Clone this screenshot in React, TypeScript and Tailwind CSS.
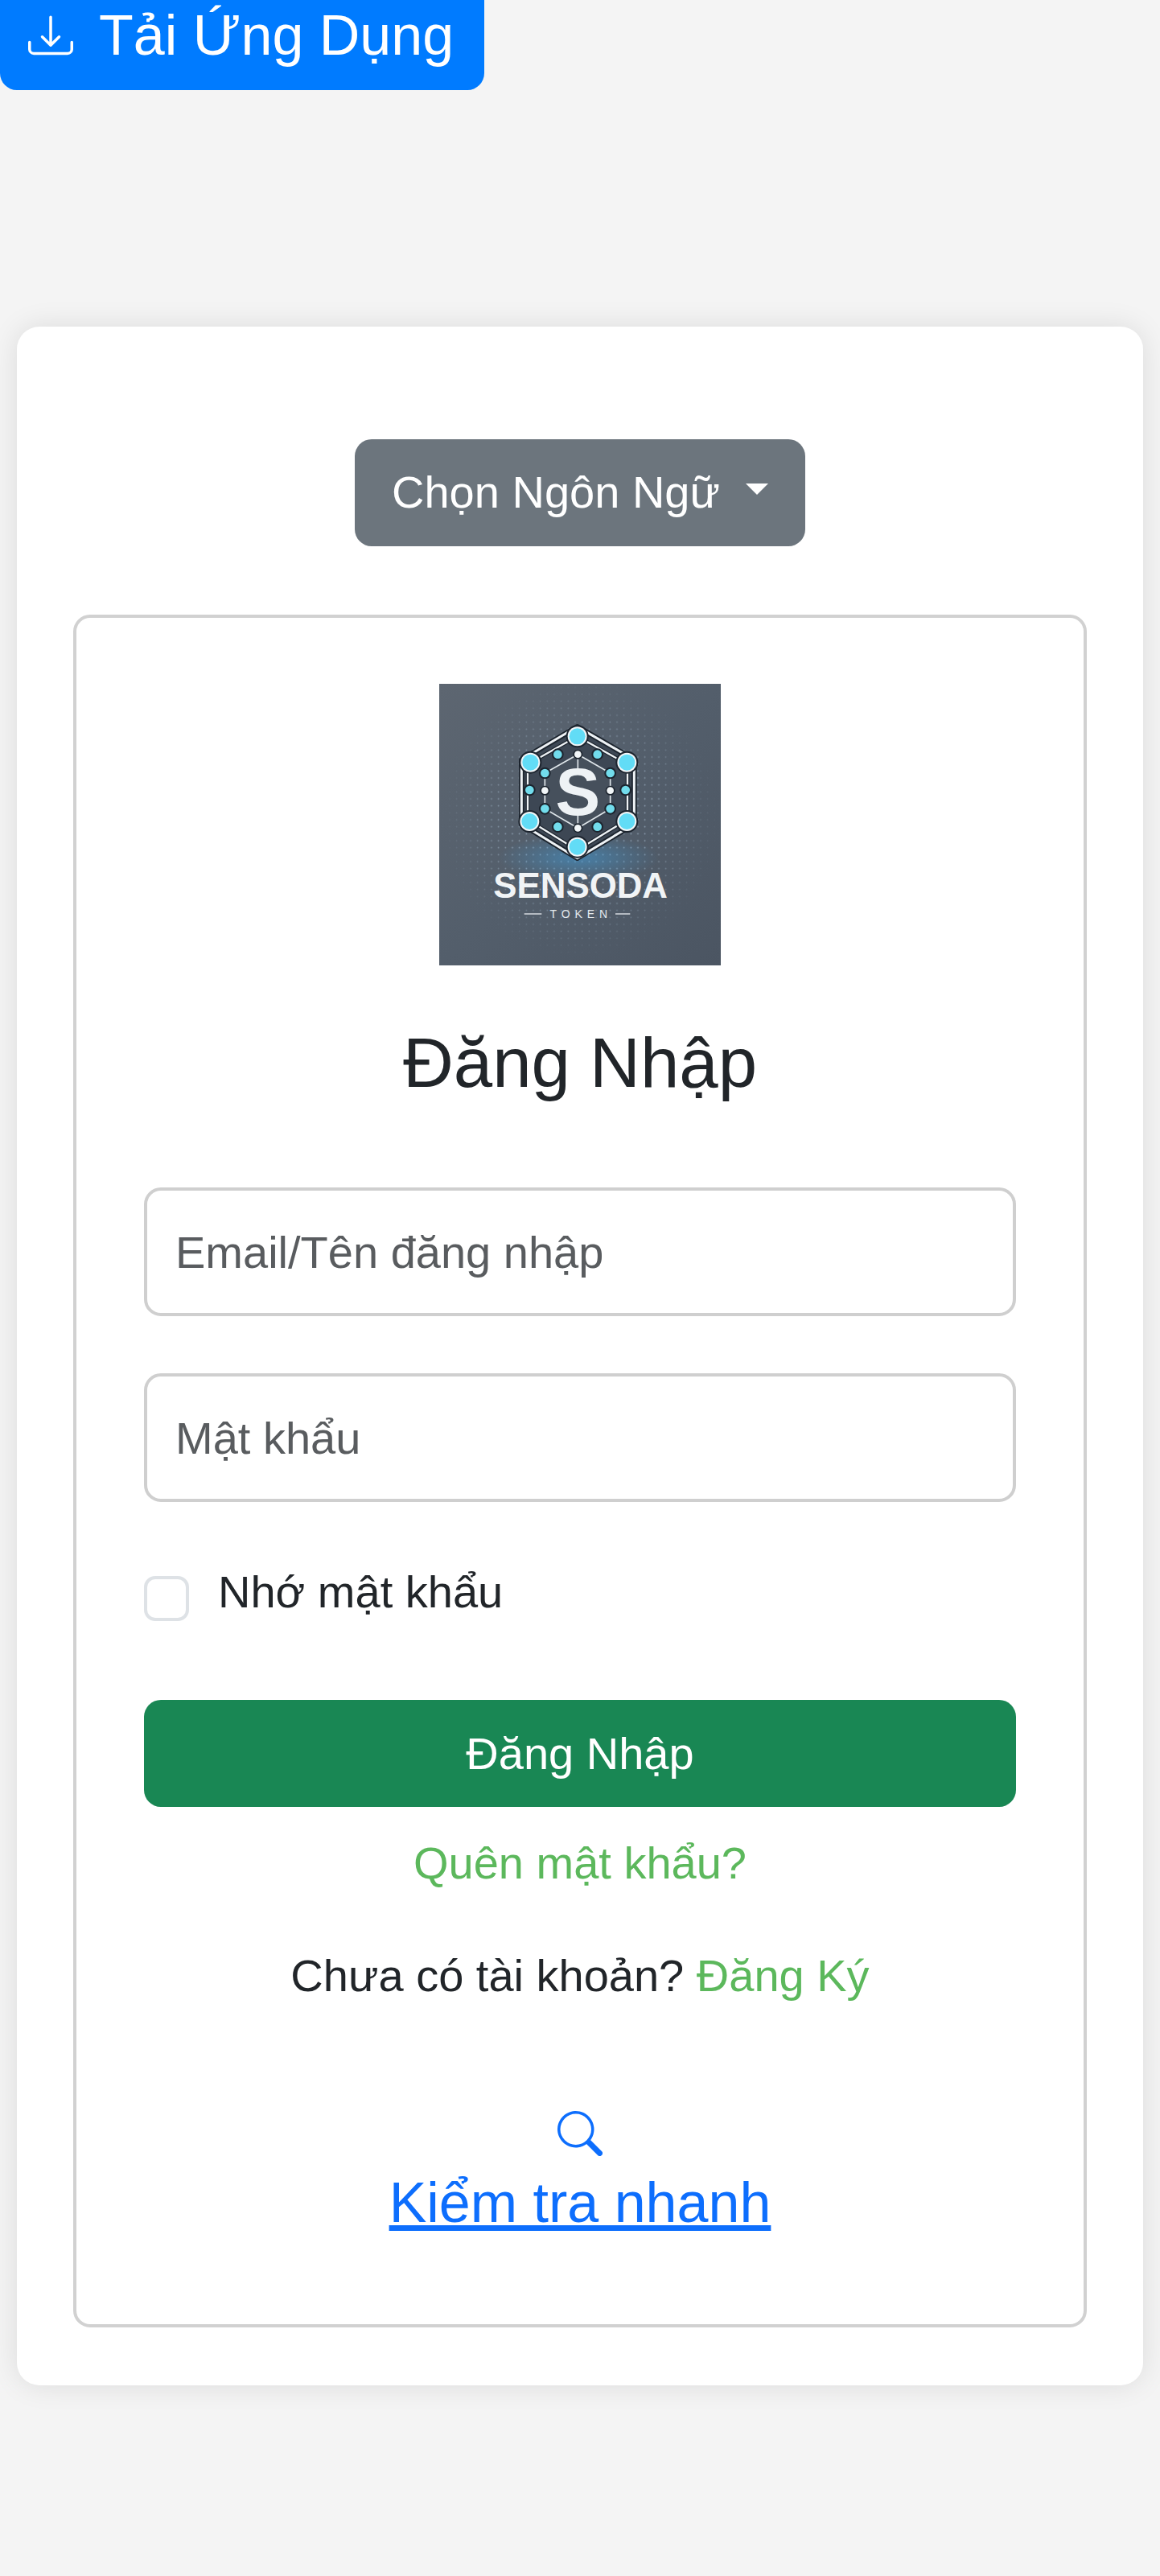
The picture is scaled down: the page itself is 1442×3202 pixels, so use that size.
import React from 'react';

function DownloadIcon() {
  return (
    <svg width="56" height="56" viewBox="0 0 16 16" fill="white" className="shrink-0">
      <path d="M.5 9.9a.5.5 0 0 1 .5.5v2.5a1 1 0 0 0 1 1h12a1 1 0 0 0 1-1v-2.5a.5.5 0 0 1 1 0v2.5a2 2 0 0 1-2 2H2a2 2 0 0 1-2-2v-2.5a.5.5 0 0 1 .5-.5z" />
      <path d="M7.646 11.854a.5.5 0 0 0 .708 0l3-3a.5.5 0 0 0-.708-.708L8.5 10.293V1.5a.5.5 0 0 0-1 0v8.793L5.354 8.146a.5.5 0 1 0-.708.708l3 3z" />
    </svg>
  );
}

function SearchIcon() {
  return (
    <svg width="56" height="56" viewBox="0 0 16 16" fill="#0d6efd">
      <path d="M11.742 10.344a6.5 6.5 0 1 0-1.397 1.398h-.001c.03.04.062.078.098.115l3.85 3.85a1 1 0 0 0 1.415-1.414l-3.85-3.85a1.007 1.007 0 0 0-.115-.1zM12 6.5a5.5 5.5 0 1 1-11 0 5.5 5.5 0 0 1 11 0z" />
    </svg>
  );
}

const bigNodes = [[515, 196], [340, 293], [700, 293], [337, 513], [700, 513], [515, 608]];
const midNodes = [[442, 263], [590, 263], [337, 396], [695, 396], [394, 333], [638, 333], [394, 466], [638, 466], [442, 533], [590, 533]];
const whiteNodes = [[517, 263], [394, 398], [638, 398], [517, 538]];

function Logo() {
  return (
    <svg width="350" height="350" viewBox="0 0 1050 1050" className="block">
      <defs>
        <linearGradient id="bg" x1="0" y1="0" x2="1" y2="1">
          <stop offset="0" stopColor="#5d6671" />
          <stop offset="0.5" stopColor="#535e6b" />
          <stop offset="1" stopColor="#4b5562" />
        </linearGradient>
        <pattern id="dots" width="26" height="26" patternUnits="userSpaceOnUse">
          <circle cx="13" cy="13" r="2.6" fill="#b5cde2" fillOpacity="0.6" />
        </pattern>
        <radialGradient id="glow" cx="0.5" cy="0.5" r="0.5">
          <stop offset="0" stopColor="#3f9bd8" stopOpacity="0.55" />
          <stop offset="1" stopColor="#3f9bd8" stopOpacity="0" />
        </radialGradient>
        <radialGradient id="dotFade" cx="0.5" cy="0.48" r="0.5">
          <stop offset="0.5" stopColor="white" />
          <stop offset="1" stopColor="black" />
        </radialGradient>
        <mask id="fade">
          <rect width="1050" height="1050" fill="url(#dotFade)" />
        </mask>
      </defs>
      <rect width="1050" height="1050" fill="url(#bg)" />
      <rect width="1050" height="1050" fill="url(#dots)" mask="url(#fade)" />
      <ellipse cx="520" cy="650" rx="300" ry="90" fill="url(#glow)" />
      {/* hexagon rings */}
      <polygon points="515,160 727,283 727,523 515,650 307,523 307,283" fill="#3d4754" stroke="#1c242e" strokeWidth="20" strokeLinejoin="round" />
      <polygon points="515,160 727,283 727,523 515,650 307,523 307,283" fill="none" stroke="#eef2f5" strokeWidth="9" strokeLinejoin="round" />
      <polygon points="515,196 702,300 702,506 515,620 330,506 330,300" fill="none" stroke="#1c242e" strokeWidth="14" strokeLinejoin="round" />
      <polygon points="515,196 702,300 702,506 515,620 330,506 330,300" fill="none" stroke="#eef2f5" strokeWidth="7" strokeLinejoin="round" />
      <polygon points="517,263 638,333 638,466 517,538 394,466 394,333" fill="#46505c" stroke="#dfe6ea" strokeWidth="5" strokeLinejoin="round" />
      <line x1="517" y1="263" x2="517" y2="315" stroke="#dfe6ea" strokeWidth="5" />
      <line x1="517" y1="490" x2="517" y2="538" stroke="#dfe6ea" strokeWidth="5" />
      {bigNodes.map(([cx, cy], i) => (
        <g key={i}>
          <circle cx={cx} cy={cy} r="42" fill="#1c242e" />
          <circle cx={cx} cy={cy} r="36" fill="#f2f6f8" />
          <circle cx={cx} cy={cy} r="30" fill="#62dcf6" />
        </g>
      ))}
      {midNodes.map(([cx, cy], i) => (
        <g key={i}>
          <circle cx={cx} cy={cy} r="22" fill="#1c242e" />
          <circle cx={cx} cy={cy} r="16" fill="#72dcec" />
        </g>
      ))}
      {whiteNodes.map(([cx, cy], i) => (
        <g key={i}>
          <circle cx={cx} cy={cy} r="18" fill="#1c242e" />
          <circle cx={cx} cy={cy} r="13" fill="#f2f6f8" />
        </g>
      ))}
      <text x="517" y="488" textAnchor="middle" fontFamily="'Liberation Sans', sans-serif" fontWeight="700" fontSize="250" fill="#eef2f5">S</text>
      <text x="527" y="798" textAnchor="middle" textLength="650" lengthAdjust="spacingAndGlyphs" fontFamily="'Liberation Sans', sans-serif" fontWeight="700" fontSize="132" fill="#f1f4f6">SENSODA</text>
      <text x="520" y="873" textAnchor="middle" textLength="215" lengthAdjust="spacing" fontFamily="'Liberation Sans', sans-serif" fontSize="42" fill="#e4e9ed">TOKEN</text>
      <rect x="317" y="856" width="65" height="4" fill="#e4e9ed" />
      <rect x="657" y="856" width="55" height="4" fill="#e4e9ed" />
    </svg>
  );
}

export default function App() {
  return (
    <div className="h-[3202px] overflow-hidden bg-[#f4f4f4] font-['Liberation_Sans',Arial,sans-serif] text-[56px] leading-[84px] text-[#212529]">
      {/* download bar, page is scrolled a bit so top is cut */}
      <button className="-mt-[24px] flex h-[136px] w-[602px] items-center gap-[32px] rounded-[21px] bg-[#007bff] pl-[35px] text-[70px] text-white">
        <DownloadIcon />
        Tải Ứng Dụng
      </button>

      <div className="mx-[21px] mt-[294px] flex h-[2559px] flex-col items-center rounded-[28px] bg-white px-[70px] pt-[140px] shadow-[0_0_35px_rgba(0,0,0,0.1)]">
        <button className="flex h-[133px] w-[560px] items-center justify-center gap-[26px] rounded-[21px] bg-[#6c757d] pb-[2px] text-white">
          Chọn Ngôn Ngữ
          <span className="mb-[8px] ml-[6px] h-0 w-0 border-x-[14px] border-t-[14px] border-x-transparent border-t-white" />
        </button>

        <div className="mt-[85px] flex h-[2129px] w-full flex-col items-center rounded-[21px] border-[4px] border-[#d1d1d1] px-[84px] pt-[82px]">
          <Logo />
          <h3 className="mt-[60px] text-[87px] leading-[122px]">Đăng Nhập</h3>

          <input
            placeholder="Email/Tên đăng nhập"
            className="mt-[94px] h-[160px] w-full rounded-[21px] border-[4px] border-[#cfcfcf] px-[35px] placeholder:text-[#595c5f]"
          />
          <input
            placeholder="Mật khẩu"
            className="mt-[71px] h-[160px] w-full rounded-[21px] border-[4px] border-[#cfcfcf] px-[35px] placeholder:text-[#595c5f]"
          />

          <label className="mt-[64px] flex w-full items-start gap-[36px]">
            <span className="mt-[28px] block h-[56px] w-[56px] rounded-[14px] border-[4px] border-[#dee2e6] bg-white" />
            <span className="mt-[6px]">Nhớ mật khẩu</span>
          </label>

          <button className="mt-[92px] h-[133px] w-full rounded-[21px] bg-[#198754] text-white">Đăng Nhập</button>

          <a className="mt-[28px] text-[#5cb85c]">Quên mật khẩu?</a>
          <p className="mt-[56px]">
            Chưa có tài khoản? <a className="text-[#5cb85c]">Đăng Ký</a>
          </p>

          <div className="mt-[126px] flex flex-col items-center">
            <SearchIcon />
            <a className="mt-[6px] text-[70px] leading-[105px] text-[#0d6efd] underline">Kiểm tra nhanh</a>
          </div>
        </div>
      </div>
    </div>
  );
}
